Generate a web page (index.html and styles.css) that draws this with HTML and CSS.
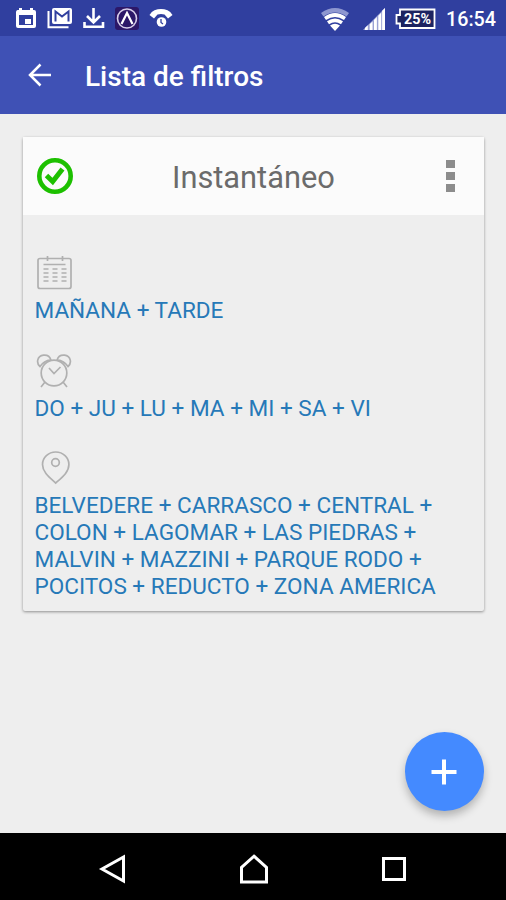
FILE: index.html
```html
<!DOCTYPE html>
<html lang="es">
<head>
    <meta charset="UTF-8">
    <meta name="viewport" content="width=device-width, initial-scale=1.0">
    <title>Lista de filtros</title>
    <link rel="stylesheet" href="styles.css">
</head>
<body>
    <div class="status-bar">
        <!-- Notifications -->
        <svg width="180" height="36" viewBox="0 0 180 36">
            <path fill="#fff" fill-rule="evenodd" d="M19 8h3v2h8V8h3v2h1q2 0 2 2v14q0 2-2 2H18q-2 0-2-2V12q0-1.500 1.500-2H19zM19 15v10h14V15z"/>
            <path fill="#fff" d="M25 19h6v5h-6z"/>
            <path fill="none" stroke="#fff" stroke-width="2" d="M48.500 11v16.200h20"/>
            <rect x="52" y="8" width="20" height="16" rx="2" fill="#fff"/>
            <path fill="none" stroke="#303f9f" stroke-width="2" d="M55.500 21.500v-10l6.500 5 6.500-5v10"/>
            <path fill="none" stroke="#fff" stroke-width="2.600" d="M93.500 8v14M87 16l6.500 6.500L100 16M84.500 22v4.700h18.500V22"/>
            <rect x="115" y="7" width="24" height="23" rx="3" fill="#2c1768"/>
            <circle cx="127" cy="18.500" r="9.500" fill="none" stroke="#d6cde9" stroke-width="1.600"/>
            <path fill="none" stroke="#fff" stroke-width="2.200" d="M121.500 24l5.500-11 5.500 11"/>
            <path fill="#fff" d="M149.500 15q1-3 5-4.800 6.500-2.600 13 0 4 1.800 5 4.800L168 18.500l-3.500-4q-3.500-1-7 0l-3.500 4z"/>
            <circle cx="161.500" cy="22" r="4.800" fill="#fff"/>
            <path fill="none" stroke="#303f9f" stroke-width="1.300" d="M161 19v3.500l2 1.500"/>
        </svg>
        <div class="status-right">
            <svg width="28" height="24" viewBox="0 0 28 24">
                <path fill="#8e97d0" d="M0 6q14-10 28 0l-2.500 3.500q-11.500-8-23 0z"/>
                <path fill="#fff" d="M3 10q11-8 22 0l-2 3q-9-6-18 0zM6 14.300q8-5.500 16 0l-2 3q-6-4-12 0zM9 18.500q5-3.500 10 0L14 24z"/>
            </svg>
            <svg class="signal" width="22" height="22" viewBox="0 0 23 23">
                <path fill="#9aa2d4" d="M0 23L23 0v23z"/>
                <path fill="#fff" d="M2 21l3-3v5H2zM7 17l3-3v9H7zM11.500 12.500l3-3V23h-3zM16 8l3-3v18h-3zM20 3l3-3v23h-3z"/>
            </svg>
            <svg class="battery" width="41" height="22" viewBox="0 0 41 22">
                <path fill="#1c2361" stroke="#fff" stroke-width="1.800" d="M5 1.500h34.500v18.500H5v-4.500H1.500V7H5z"/>
                <text class="battery-text" x="22.500" y="16" text-anchor="middle" textLength="27" lengthAdjust="spacingAndGlyphs">25%</text>
            </svg>
            <span class="clock">16:54</span>
        </div>
    </div>

    <header class="app-bar">
        <svg width="24" height="24" viewBox="0 0 24 24">
            <path fill="none" stroke="#fff" stroke-width="2.500" d="M23 12H2.500M12.500 1.500L2 12l10.500 10.500"/>
        </svg>
        <h1>Lista de filtros</h1>
    </header>

    <main class="content">
        <div class="card">
            <div class="card-header">
                <svg width="36" height="38" viewBox="1 0 36 38">
                    <circle cx="19" cy="19" r="15.700" fill="none" stroke="#1dc000" stroke-width="4.600"/>
                    <path fill="none" stroke="#1dc000" stroke-width="5" d="M10.500 18.500l6.200 6L26.500 12"/>
                </svg>
                <h2>Instantáneo</h2>
                <div class="menu-dots">
                    <span></span>
                    <span></span>
                    <span></span>
                </div>
            </div>
            <div class="card-body">
                <div class="filter">
                    <svg class="line-icon" width="38" height="34" viewBox="0 0 38 34">
                        <rect x="3" y="2.500" width="33" height="30" rx="2"/>
                        <path d="M12.500 0v5M27.500 0v5M8.500 8.500h22"/>
                        <path stroke-dasharray="5 4" d="M8.500 13h23M8.500 17h23M8.500 21h23M8.500 25h23"/>
                    </svg>
                    <p>MAÑANA + TARDE</p>
                </div>
                <div class="filter">
                    <svg class="line-icon" width="38" height="34" viewBox="0 0 38 34">
                        <circle cx="19" cy="19" r="12.800"/>
                        <path d="M14 14l5 5.500 6.500-6.500M10 28l-4 5M28 28l4 5"/>
                        <path d="M5 12.500C1 9 2 2 8.500 1.200c4-.4 6.500 1.800 7.300 4.500Q9 7 5 12.500zM33 12.500C37 9 36 2 29.500 1.200c-4-.4-6.500 1.800-7.300 4.500Q29 7 33 12.500z"/>
                    </svg>
                    <p>DO + JU + LU + MA + MI + SA + VI</p>
                </div>
                <div class="filter">
                    <svg class="line-icon" width="38" height="34" viewBox="0 0 38 34">
                        <path d="M20.700 32C14 26 7.500 21 7.500 13.500a13.200 12.500 0 0 1 26.400 0C33.900 21 27.500 26 20.700 32z"/>
                        <circle cx="20.500" cy="11.500" r="3.800"/>
                    </svg>
                    <p>BELVEDERE + CARRASCO + CENTRAL + COLON + LAGOMAR + LAS PIEDRAS + MALVIN + MAZZINI + PARQUE RODO + POCITOS + REDUCTO + ZONA AMERICA</p>
                </div>
            </div>
        </div>
        <button class="fab" aria-label="Agregar">
            <svg width="26" height="26" viewBox="0 0 26 26">
                <path fill="none" stroke="#fff" stroke-width="4" d="M13 .5v25M.5 13h25"/>
            </svg>
        </button>
    </main>

    <nav class="nav-bar">
        <svg width="30" height="30" viewBox="0 0 30 30">
            <path d="M25.500 3v24L4 15z"/>
        </svg>
        <svg width="30" height="30" viewBox="0 0 30 30">
            <path d="M15 2.200l12.500 11.300v14.500h-25V13.500z"/>
        </svg>
        <svg width="30" height="30" viewBox="0 0 30 30">
            <rect x="4.500" y="4.500" width="21" height="21"/>
        </svg>
    </nav>
</body>
</html>
```
FILE: styles.css
```css
* {
    box-sizing: border-box;
}
body {
    margin: 0;
    height: 900px;
    display: flex;
    flex-direction: column;
    font-family: Roboto, sans-serif;
    background: #eeeeee;
    overflow: hidden;
}
h1, h2, p {
    margin: 0;
}
svg {
    display: block;
    flex: none;
}

/* Status bar */
.status-bar {
    height: 36px;
    display: flex;
    align-items: center;
    background: #303f9f;
    color: #fff;
}
.status-right {
    margin-left: auto;
    padding: 2px 10px 0 0;
    display: flex;
    align-items: center;
}
.signal {
    margin-left: 14px;
}
.battery {
    margin-left: 10px;
}
.battery-text {
    font-size: 15px;
    font-weight: 700;
    fill: #fff;
}
.clock {
    margin-left: 10px;
    font-size: 19.700px;
    font-weight: 500;
}

/* App bar */
.app-bar {
    height: 78px;
    padding: 0 28px;
    display: flex;
    align-items: center;
    gap: 33px;
    background: #3f51b5;
    color: #fff;
}
.app-bar h1 {
    padding-top: 2px;
    font-size: 28px;
    font-weight: 500;
}

/* Filter card */
.content {
    position: relative;
    height: 719px;
    padding: 23px 22px 0 23px;
}
.card {
    height: 474px;
    background: #eeeeee;
    border-radius: 2px;
    box-shadow: 0 1px 3px rgba(0, 0, 0, 0.4);
}
.card-header {
    height: 78px;
    padding: 0 29px 0 14px;
    display: flex;
    align-items: center;
    background: #fbfbfb;
}
.card-header h2 {
    margin-left: 99px;
    padding-top: 2px;
    font-size: 30.800px;
    font-weight: 400;
    color: #6b6b6b;
}
.menu-dots {
    margin-left: auto;
    display: flex;
    flex-direction: column;
    gap: 4px;
}
.menu-dots span {
    width: 9px;
    height: 8px;
    background: #8c8c8c;
}
.card-body {
    padding: 41px 11.500px 0;
}
.filter {
    margin-bottom: 29px;
}
.filter p {
    margin-top: 8px;
    font-size: 22.560px;
    line-height: 26.700px;
    color: #2679b8;
}
.line-icon {
    margin-left: 0.500px;
    fill: none;
    stroke: #b0b0b0;
    stroke-width: 1.700;
}

/* Add button */
.fab {
    position: absolute;
    right: 22px;
    bottom: 22px;
    width: 79px;
    height: 79px;
    padding: 0 2px 0 0;
    display: flex;
    align-items: center;
    justify-content: center;
    border: none;
    border-radius: 50%;
    background: #448aff;
    box-shadow: 0 5px 9px rgba(0, 0, 0, 0.25);
}

/* Navigation buttons */
.nav-bar {
    height: 67px;
    padding: 4px 97px 0 98px;
    display: flex;
    align-items: center;
    justify-content: space-between;
    background: #000;
}
.nav-bar svg {
    fill: none;
    stroke: #fff;
    stroke-width: 3;
}
```
